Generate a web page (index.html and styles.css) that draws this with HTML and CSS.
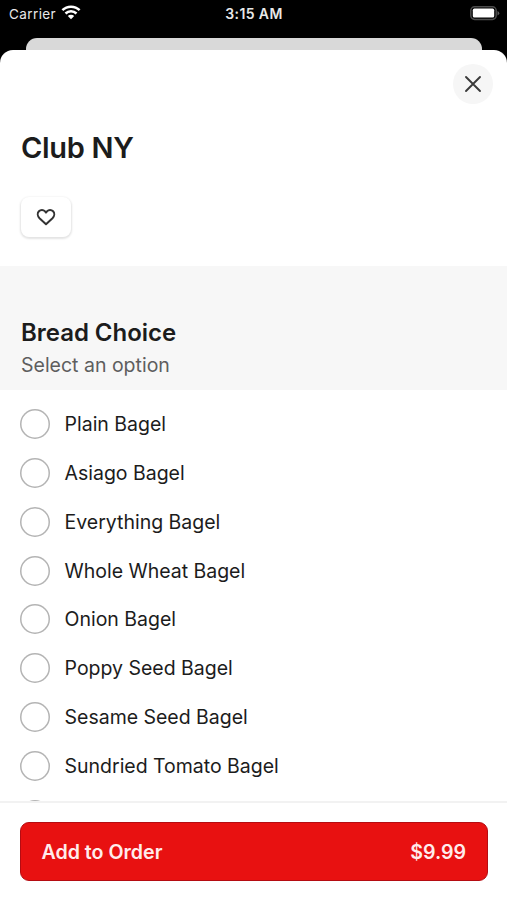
FILE: index.html
```html
<!DOCTYPE html>
<html lang="en">
<head>
<meta charset="utf-8">
<title>Club NY</title>
<link rel="stylesheet" href="styles.css">
</head>
<body>
<div class="screen">
  <header class="status">
    <div class="carrier"><span>Carrier</span>
      <svg width="20" height="15" viewBox="0 0 20 15" fill="none" stroke="#fff" stroke-width="2.5"><path d="M1.4 5.2a12.3 12.3 0 0 1 17.2 0M4.5 8.5a7.8 7.8 0 0 1 11 0"/><path d="M10 14.2 6.8 11a4.6 4.6 0 0 1 6.4 0z" fill="#fff" stroke="none"/></svg>
    </div>
    <span class="time">3:15 AM</span>
    <div class="battery"><svg width="31" height="15" viewBox="0 0 31 15"><rect x="1.8" y=".8" width="25.4" height="12.6" rx="3.8" fill="none" stroke="#4c4c4c" stroke-width="1.5"/><rect x="3.8" y="2.6" width="21.4" height="9" rx="1.6" fill="#fff"/><path d="M28.5 5v4.5q1.8-.8 1.8-2.25T28.5 5z" fill="#5c5c5c"/></svg></div>
  </header>
  <div class="card-behind"></div>
  <main class="sheet">
    <section class="intro">
      <button class="close" aria-label="Close"><svg width="18" height="18" viewBox="0 0 18 18" fill="none" stroke="#3a3a3a" stroke-width="1.9" stroke-linecap="round"><path d="M2 2l14 14M16 2 2 16"/></svg></button>
      <h1>Club NY</h1>
      <button class="favorite" aria-label="Favorite"><svg width="20" height="18" viewBox="0 0 20 18" fill="none" stroke="#333" stroke-width="2" stroke-linejoin="round"><path d="M10 16.2 3.5 10.2C1.3 8 1.3 5 2.9 3.3c1.7-1.8 4.4-1.8 5.9-.1L10 4.6l1.2-1.4c1.5-1.7 4.2-1.7 5.9.1 1.6 1.7 1.6 4.7-.6 6.9z"/></svg></button>
    </section>
    <section class="group">
      <h2>Bread Choice</h2>
      <p>Select an option</p>
    </section>
    <ul class="options">
      <li><i class="radio"></i><span>Plain Bagel</span></li>
      <li><i class="radio"></i><span>Asiago Bagel</span></li>
      <li><i class="radio"></i><span>Everything Bagel</span></li>
      <li><i class="radio"></i><span>Whole Wheat Bagel</span></li>
      <li><i class="radio"></i><span>Onion Bagel</span></li>
      <li><i class="radio"></i><span>Poppy Seed Bagel</span></li>
      <li><i class="radio"></i><span>Sesame Seed Bagel</span></li>
      <li><i class="radio"></i><span>Sundried Tomato Bagel</span></li>
      <li><i class="radio"></i></li>
    </ul>
    <footer class="footer">
      <button class="order"><span>Add to Order</span><span class="price">$9.99</span></button>
    </footer>
  </main>
</div>
</body>
</html>
```

FILE: styles.css
```css
* { box-sizing: border-box; }
body { margin: 0; background: #000; font-family: Inter, sans-serif; color: #1c1c1c; }
button { font: inherit; border: 0; padding: 0; display: flex; align-items: center; }
h1, h2, p, ul { margin: 0; padding: 0; }
svg { display: block; }
.screen { height: 900px; display: flex; flex-direction: column; overflow: hidden; }
.status { height: 38px; flex: none; display: grid; grid-template-columns: 1fr auto 1fr; align-items: start; padding: 5px 7px 0 9px; color: #e8e8e8; font-size: 13.5px; line-height: 18px; }
.carrier { display: flex; gap: 5px; letter-spacing: .4px; }
.time { font-weight: 600; font-size: 14px; letter-spacing: .4px; margin-left: -1px; }
.battery { justify-self: end; padding-top: 1px; }
.card-behind { height: 12px; flex: none; margin: 0 25px 0 26px; background: #d9d9d9; border-radius: 11px 11px 0 0; }
.sheet { flex: 1; min-height: 0; background: #fff; border-radius: 13px 13px 0 0; display: flex; flex-direction: column; }
.intro { height: 216px; flex: none; padding: 14px 14px 0 21px; display: flex; flex-direction: column; align-items: flex-start; }
.close { width: 40px; height: 40px; border-radius: 50%; background: #f6f6f6; justify-content: center; align-self: flex-end; flex: none; }
h1 { font-size: 29px; line-height: 36px; font-weight: 600; margin-top: 26px; letter-spacing: -.3px; }
.favorite { width: 50px; height: 40px; margin-top: 31px; border-radius: 8px; background: #fff; justify-content: center; box-shadow: 0 1px 2px 1px rgba(0,0,0,.11); }
.group { height: 124px; flex: none; background: #f7f7f7; padding: 51px 21px 0; }
h2 { font-size: 24px; line-height: 32px; font-weight: 600; letter-spacing: -.03px; }
p { font-size: 19.5px; line-height: 26px; margin-top: 3px; color: #5e5e5e; }
.options { flex: 1; min-height: 0; overflow: hidden; list-style: none; padding: 9.5px 21px 0 20px; }
.options li { height: 48.86px; display: flex; align-items: center; gap: 14.6px; font-size: 19.5px; letter-spacing: -.02px; }
.radio { width: 30px; height: 30px; flex: none; box-shadow: inset 0 0 0 1.5px #b4b4b4; border-radius: 50%; }
.footer { height: 99px; flex: none; border-top: 2px solid #f2f2f2; padding: 19px 19px 0 20px; background: #fff; }
.order { width: 100%; height: 59px; background: #e81111; border: 1.5px solid #b50c12; border-radius: 9px; padding: 0 21px 0 20.5px; justify-content: space-between; color: #ffecec; font-size: 19.6px; font-weight: 600; }
```
